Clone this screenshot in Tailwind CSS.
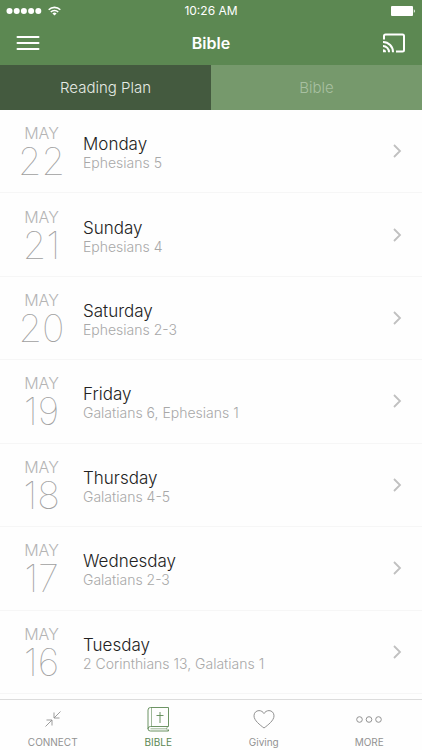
<!DOCTYPE html>
<html lang="en">
<head>
    <meta charset="UTF-8">
    <meta name="viewport" content="width=device-width, initial-scale=1.0">
    <title>Bible - Reading Plan</title>
    <script src="https://cdn.jsdelivr.net/npm/@tailwindcss/browser@4"></script>
</head>
<body class="bg-[#fefefe] font-['Inter','Liberation_Sans',sans-serif] antialiased">
    <div class="min-h-screen flex flex-col">
        <header class="bg-[#5c8852] text-white">
            <!-- Status bar -->
            <div class="relative h-[22px] px-[6px] flex items-center justify-between">
                <div class="flex items-center gap-[6px]">
                    <svg width="36" height="8" viewBox="0 0 36 8" fill="currentColor">
                        <circle cx="3.5" cy="4" r="3"/><circle cx="10.7" cy="4" r="3"/><circle cx="17.9" cy="4" r="3"/><circle cx="25.1" cy="4" r="3"/><circle cx="32.3" cy="4" r="3"/>
                    </svg>
                    <svg width="13" height="10" viewBox="0 0 13 10" fill="none" stroke="currentColor" stroke-width="1.6">
                        <path d="M.7 3.7a8.3 8.3 0 0 1 11.6 0M2.8 6a5.3 5.3 0 0 1 7.4 0"/>
                        <path d="M6.5 9.6 4.4 7.5a3 3 0 0 1 4.2 0z" fill="currentColor" stroke="none"/>
                    </svg>
                </div>
                <span class="absolute inset-x-0 text-center text-[12px]">10:26 AM</span>
                <svg width="26" height="10" viewBox="0 0 26 10" fill="currentColor">
                    <rect x="1" width="22" height="10" rx="1"/>
                    <path d="M23.8 3.2c1.4.5 1.4 3.1 0 3.6z"/>
                </svg>
            </div>
            <!-- Title bar -->
            <div class="h-[43px] px-4 pb-[2px] flex items-center justify-between">
                <button aria-label="Menu">
                    <svg width="24" height="16" viewBox="0 0 24 16" stroke="currentColor" stroke-width="2" stroke-linecap="round">
                        <path d="M1.5 2h21M1.5 8h21M1.5 14h21"/>
                    </svg>
                </button>
                <h1 class="text-[16px] font-semibold">Bible</h1>
                <button aria-label="Cast">
                    <svg width="24" height="20" viewBox="0 0 24 20" fill="none" stroke="currentColor" stroke-width="2">
                        <path d="M2 6.5V3q0-1.5 1.5-1.5h17Q22 1.5 22 3v14q0 1.5-1.5 1.5H14"/>
                        <path d="M1 9a10 10 0 0 1 10 10.3M1 13.1a6 6 0 0 1 6 6.2"/>
                        <path d="M1 16.2a3 3 0 0 1 3 3.1H1z" fill="currentColor" stroke="none"/>
                    </svg>
                </button>
            </div>
            <!-- Tabs -->
            <div class="grid grid-cols-2 h-[45px] text-[15px]">
                <button class="pt-[2px] bg-[#445a3f] text-[#e6ebe5] font-light">Reading Plan</button>
                <button class="pt-[2px] bg-[#76996c] text-[#a8c0a1] font-light">Bible</button>
            </div>
        </header>

        <main class="flex-1 flex flex-col pb-[5px]">
            <ul id="plan" class="flex-1 grid auto-rows-fr"></ul>
        </main>

        <nav class="h-[51px] grid grid-cols-4 border-t border-[#dcdcdc] text-[10px] text-[#929292]">
            <a href="#connect" class="flex flex-col items-center justify-between pt-[5px]">
                <svg width="26" height="28" viewBox="0 0 26 28" fill="none" stroke="currentColor" stroke-width="0.9">
                    <path d="M20.5 6.5l-6.500 6.500M14 7.500v5.500h5.500M5.500 21.500l6.500-6.500M12 20.500V15H6.500"/>
                </svg>
                CONNECT
            </a>
            <a href="#bible" class="flex flex-col items-center justify-between pt-[5px] text-[#5c8852]">
                <svg width="26" height="28" viewBox="0 0 26 28" fill="none" stroke="currentColor" stroke-width="0.9">
                    <path d="M5.5 2.5H23.5V21.5H5.5q-2.5 0-2.5 2.3t2.5 2.2H23.5V24.5M3 24V5q0-2.5 2.5-2.5"/>
                    <path d="M6.5 2.5v19M22.5 21.5q-1.5 2 0 4M5.5 23.8H22" stroke-width="0.6"/>
                    <path d="M15 7v11M11.5 10.5h7"/>
                </svg>
                BIBLE
            </a>
            <a href="#giving" class="flex flex-col items-center justify-between pt-[5px]">
                <svg width="26" height="28" viewBox="0 0 26 28" fill="none" stroke="currentColor" stroke-width="1">
                    <path d="M13 23C9 20 3 15.5 3 10.8 3 7.8 5.2 5.6 8 5.6c2.2 0 4 1.2 5 3 1-1.8 2.8-3 5-3 2.8 0 5 2.2 5 5.2C23 15.5 17 20 13 23z"/>
                </svg>
                Giving
            </a>
            <a href="#more" class="flex flex-col items-center justify-between pt-[5px]">
                <svg width="26" height="28" viewBox="0 0 26 28" fill="none" stroke="currentColor" stroke-width="1">
                    <circle cx="3.5" cy="14.5" r="2.8"/><circle cx="13" cy="14.5" r="2.8"/><circle cx="22.5" cy="14.5" r="2.8"/>
                </svg>
                MORE
            </a>
        </nav>
    </div>

    <script>
        const readings = [
            { date: 22, day: 'Monday', text: 'Ephesians 5' },
            { date: 21, day: 'Sunday', text: 'Ephesians 4' },
            { date: 20, day: 'Saturday', text: 'Ephesians 2-3' },
            { date: 19, day: 'Friday', text: 'Galatians 6, Ephesians 1' },
            { date: 18, day: 'Thursday', text: 'Galatians 4-5' },
            { date: 17, day: 'Wednesday', text: 'Galatians 2-3' },
            { date: 16, day: 'Tuesday', text: '2 Corinthians 13, Galatians 1' }
        ];

        document.getElementById('plan').innerHTML = readings.map(r => `
            <li class="border-b border-[#f6f6f6]">
                <a href="#may-${r.date}" class="h-full flex items-center pr-5">
                    <div class="w-[83px] pt-1 text-center text-[#b4b4b4]">
                        <div class="text-[16px] leading-[16px] font-light">MAY</div>
                        <div class="text-[38px] leading-[40px] font-thin text-[#a0a0a0]">${r.date}</div>
                    </div>
                    <div class="flex-1 pt-1">
                        <div class="text-[17px] leading-[20px] font-light text-[#222222]">${r.day}</div>
                        <div class="text-[14px] leading-[18px] font-light text-[#a8a8a8]">${r.text}</div>
                    </div>
                    <svg width="10" height="14" viewBox="0 0 10 14" fill="none" stroke="#c0c0c0" stroke-width="1.8">
                        <path d="M2 1l6 6-6 6"/>
                    </svg>
                </a>
            </li>
        `).join('');
    </script>
</body>
</html>
